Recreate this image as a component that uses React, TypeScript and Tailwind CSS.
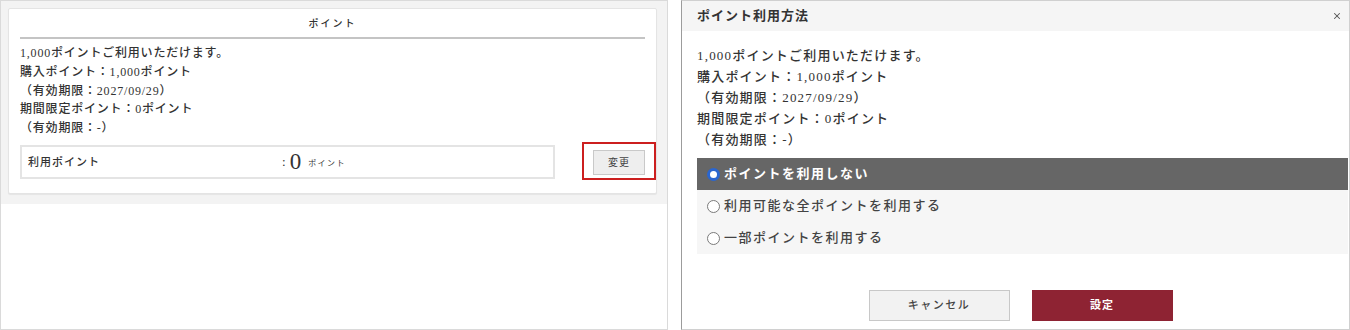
import { X } from 'lucide-react';

const font = { fontFamily: '"Liberation Serif", "Noto Sans CJK JP", serif' };

const infoLines = [
  '1,000ポイントご利用いただけます。',
  '購入ポイント：1,000ポイント',
  '（有効期限：2027/09/29）',
  '期間限定ポイント：0ポイント',
  '（有効期限：-）',
];

const options = ['ポイントを利用しない', '利用可能な全ポイントを利用する', '一部ポイントを利用する'];

function Radio({ checked }: { checked: boolean }) {
  return checked ? (
    <span className="w-[13px] h-[13px] rounded-full bg-[#2a66d0] flex items-center justify-center shrink-0">
      <span className="w-[7px] h-[7px] rounded-full bg-white" />
    </span>
  ) : (
    <span className="w-[13px] h-[13px] rounded-full border-[1.5px] border-[#7a7a7a] bg-white shrink-0" />
  );
}

export default function App() {
  return (
    <div className="w-[1350px] h-[330px] bg-white flex gap-[13px] text-[#333]" style={font}>
      {/* Left: points summary */}
      <div className="w-[668px] h-[330px] border border-[#dadada] flex flex-col">
        <div className="bg-[#f3f3f3] pl-[7px] pr-[10px] pt-[7px] pb-[10px]">
          <div className="bg-white border border-[#e4e4e4] rounded-[2px] shadow-[0_1px_1px_rgba(0,0,0,0.06)] px-[11px] pb-[14px]">
            <div className="h-[30px] flex items-center justify-center border-b-[2px] border-[#c4c4c4] text-[10px] tracking-[2px] font-medium">
              ポイント
            </div>
            <div className="pt-[5px] pb-[7px] text-[12px] leading-[18.75px] tracking-[0.8px] font-medium">
              {infoLines.map((l) => (
                <div key={l}>{l}</div>
              ))}
            </div>
            <div className="flex items-center justify-between">
              <div className="w-[535px] h-[34px] border-[2px] border-[#e4e4e4] flex items-center pl-[6px]">
                <span className="w-[254px] text-[11px] tracking-[1px] font-medium">利用ポイント</span>
                <span className="flex items-center">
                  <span className="text-[13px] mr-[4px]">:</span>
                  <span className="text-[23px] leading-none font-light mr-[7px]">0</span>
                  <span className="text-[8px] tracking-[1.5px] mt-[4px]">ポイント</span>
                </span>
              </div>
              <div className="relative">
                <button className="w-[52px] h-[25px] bg-[#eeeeee] border border-[#c9c9c9] text-[10px] tracking-[1px] text-[#444]">
                  変更
                </button>
                <div className="absolute -left-[11px] -right-[11px] -top-[7px] -bottom-[5px] border-[2px] border-[#cc1f1f]" />
              </div>
            </div>
          </div>
        </div>
      </div>

      {/* Right: point usage dialog */}
      <div className="w-[669px] h-[330px] border border-[#d0d0d0] border-l-[#9c9c9c] flex flex-col">
        <div className="h-[30px] bg-[#f5f5f5] flex items-center justify-between pl-[15px] pr-[7px]">
          <span className="text-[13px] font-bold tracking-[1px]">ポイント利用方法</span>
          <X className="w-[10px] h-[10px] text-[#555]" strokeWidth={2.5} />
        </div>
        <div className="pl-[15px] pr-[1px] pt-[14px]">
          <div className="text-[13px] leading-[21px] tracking-[1.2px] font-medium">
            {infoLines.map((l) => (
              <div key={l}>{l}</div>
            ))}
          </div>
          <div className="mt-[8px] bg-[#f6f6f6]">
            {options.map((o, i) => (
              <div
                key={o}
                className={`h-[32px] flex items-center gap-[4px] pl-[10px] text-[13px] tracking-[1.5px] ${
                  i === 0 ? 'bg-[#666666] text-white font-bold' : 'text-[#444] font-medium'
                }`}
              >
                <Radio checked={i === 0} />
                <span>{o}</span>
              </div>
            ))}
          </div>
          <div className="flex justify-center gap-[22px] mt-[36px] pr-[4px]">
            <button className="w-[141px] h-[31px] bg-[#f2f2f2] border border-[#c8c8c8] text-[11px] tracking-[1.5px] text-[#444] font-medium">
              キャンセル
            </button>
            <button className="w-[141px] h-[31px] bg-[#8e2333] text-white text-[11px] font-bold tracking-[1px]">
              設定
            </button>
          </div>
        </div>
      </div>
    </div>
  );
}
